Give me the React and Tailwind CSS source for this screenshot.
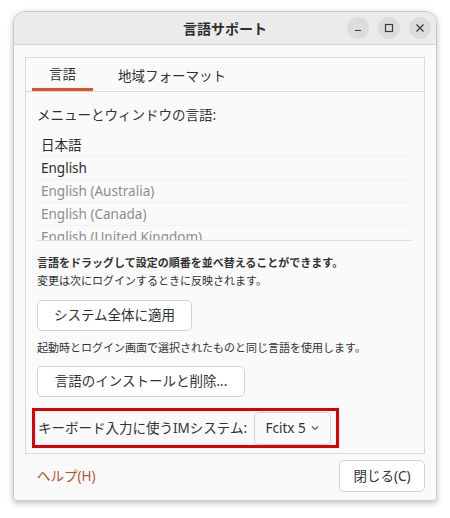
const font = "font-['Noto_Sans','Noto_Sans_CJK_JP',sans-serif]";

function TitleButton({ children }) {
  return (
    <div className="flex h-[22px] w-[22px] items-center justify-center rounded-full bg-[#dcdcdc]">
      {children}
    </div>
  );
}

export default function App() {
  const langs = [
    { name: "日本語", dim: false },
    { name: "English", dim: false },
    { name: "English (Australia)", dim: true },
    { name: "English (Canada)", dim: true },
    { name: "English (United Kingdom)", dim: true },
  ];

  return (
    <div className={`h-[518px] w-[450px] overflow-hidden bg-white pl-[13px] pt-[11px] text-[#323232] ${font}`}>
      <div className="flex h-[490px] w-[424px] flex-col overflow-hidden rounded-t-[12px] rounded-b-[3px] border border-[#c9c9c9] bg-[#fafafa] shadow-[0_2px_6px_rgba(0,0,0,0.25)]">
        {/* header bar */}
        <div className="relative flex h-[33px] shrink-0 items-center justify-center border-b border-[#d4d4d4] bg-[#ebebeb]">
          <span className="text-[14px] font-bold text-[#2e2e2e]">言語サポート</span>
          <div className="absolute right-[5px] top-[5px] flex gap-[9px]">
            <TitleButton>
              <svg width="10" height="10" viewBox="0 0 10 10">
                <path d="M2 7.5h6" stroke="#3a3a3a" strokeWidth="1.2" />
              </svg>
            </TitleButton>
            <TitleButton>
              <svg width="10" height="10" viewBox="0 0 10 10">
                <rect x="1.5" y="1.5" width="7" height="7" fill="none" stroke="#3a3a3a" strokeWidth="1.2" />
              </svg>
            </TitleButton>
            <TitleButton>
              <svg width="10" height="10" viewBox="0 0 10 10">
                <path d="M1.5 1.5l7 7M8.5 1.5l-7 7" stroke="#3a3a3a" strokeWidth="1.3" />
              </svg>
            </TitleButton>
          </div>
        </div>

        {/* body */}
        <div className="px-[11px] pt-[12px]">
          <div className="h-[397px] border border-[#dadada] bg-[#fafafa]">
            {/* tabs */}
            <div className="flex h-[34px] border-b border-[#dadada] pl-[6px]">
              <div className="flex w-[61px] items-center justify-center border-b-[3px] border-[#e1522b] pt-[3px] text-[13.5px]">
                言語
              </div>
              <div className="flex items-center pl-[25px] pt-[3px] text-[13.5px]">地域フォーマット</div>
            </div>

            <div className="px-[11px]">
              <div className="flex h-[33px] items-end text-[13.5px]">メニューとウィンドウの言語:</div>

              <div className="mt-[9px] h-[107px] overflow-hidden border-b border-[#e2e2e2]">
                {langs.map((l) => (
                  <div
                    key={l.name}
                    className={`flex h-[23px] shrink-0 items-center border-b border-[#f0f0f0] pl-[4px] text-[13.5px] ${
                      l.dim ? "text-[#8d8d8d]" : "text-[#2a2a2a]"
                    }`}
                  >
                    {l.name}
                  </div>
                ))}
              </div>

              <div className="mt-[14px] text-[11px] font-bold leading-[16px]">
                言語をドラッグして設定の順番を並べ替えることができます。
              </div>
              <div className="mt-[2px] text-[11px] leading-[16px]">変更は次にログインするときに反映されます。</div>

              <button className="mt-[11px] flex h-[31px] w-[155px] items-center justify-center rounded-[5px] border border-[#d2d2d2] bg-white text-[13.5px]">
                システム全体に適用
              </button>

              <div className="mt-[9px] text-[11px] leading-[16px]">
                起動時とログイン画面で選択されたものと同じ言語を使用します。
              </div>

              <button className="mt-[10px] flex h-[31px] w-[208px] items-center justify-center rounded-[5px] border border-[#d2d2d2] bg-white text-[13.5px]">
                言語のインストールと削除...
              </button>
            </div>

            <div className="ml-[6px] mt-[11px] flex h-[40px] w-[307px] items-center border-[3px] border-[#e00000] pl-[3px]">
              <span className="text-[13.5px]">キーボード入力に使うIMシステム:</span>
              <div className="ml-[7px] flex h-[33px] w-[77px] items-center justify-center gap-[4px] rounded-[5px] border border-[#d2d2d2] bg-[#fafafa] text-[13.5px]">
                <span>Fcitx 5</span>
                <svg width="10" height="10" viewBox="0 0 10 10">
                  <path d="M2 3.5l3 3 3-3" fill="none" stroke="#555" strokeWidth="1.1" />
                </svg>
              </div>
            </div>
          </div>

          {/* footer */}
          <div className="mt-[6px] flex items-center justify-between pl-[12px]">
            <span className="text-[13.5px] text-[#b5532e]">ヘルプ(H)</span>
            <button className="flex h-[32px] w-[86px] items-center justify-center rounded-[5px] border border-[#d2d2d2] bg-white text-[13.5px]">
              閉じる(C)
            </button>
          </div>
        </div>
      </div>
    </div>
  );
}
